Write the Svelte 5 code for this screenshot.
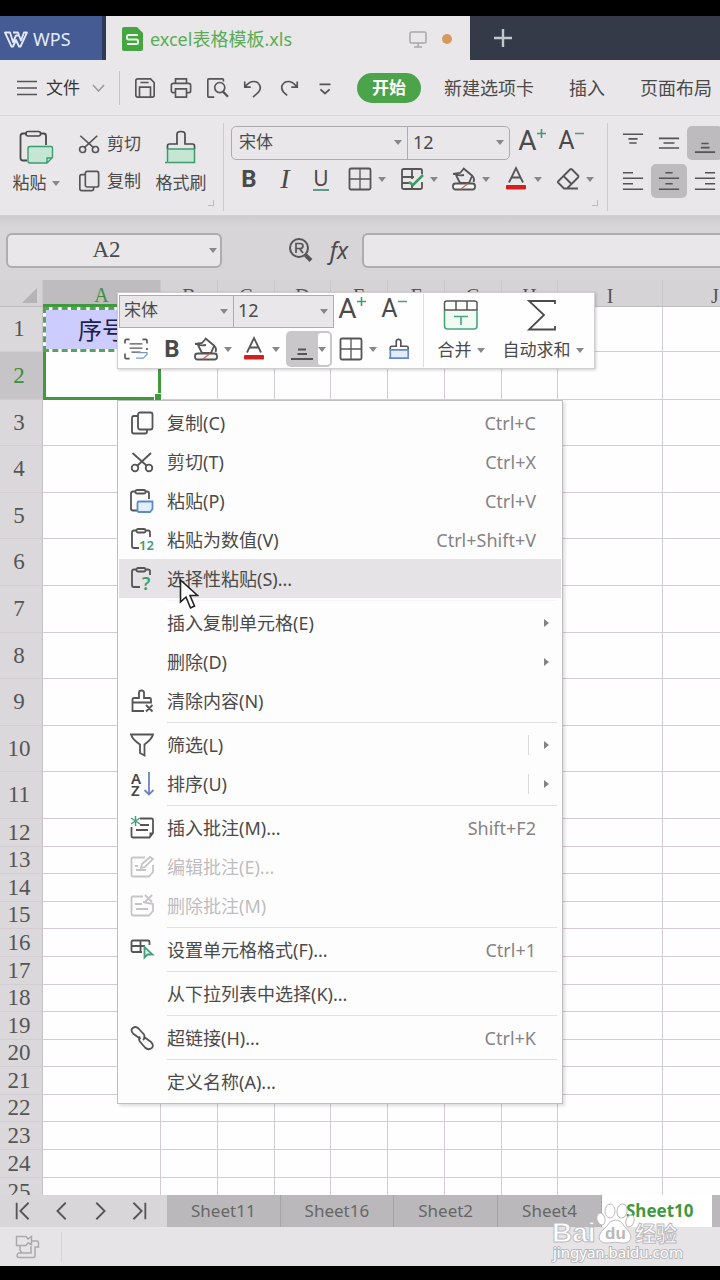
<script>
  const tabs = ['新建选项卡', '插入', '页面布局'];
  const columns = [
    { name: 'A', w: 118 }, { name: 'B', w: 57 }, { name: 'C', w: 57 }, { name: 'D', w: 56 },
    { name: 'E', w: 57 }, { name: 'F', w: 57 }, { name: 'G', w: 57 }, { name: 'H', w: 56 },
    { name: 'I', w: 105 }, { name: 'J', w: 105 }
  ];
  const rowHeights = [45, 48, 46, 47, 46, 47, 47, 46, 47, 46, 47, 28, 27, 28, 27, 28, 28, 27, 28, 27, 28, 27, 28, 28, 28];
  const menu = [
    { icon: 'copy', label: '复制(C)', key: 'Ctrl+C' },
    { icon: 'cut', label: '剪切(T)', key: 'Ctrl+X' },
    { icon: 'paste', label: '粘贴(P)', key: 'Ctrl+V' },
    { icon: 'values', label: '粘贴为数值(V)', key: 'Ctrl+Shift+V' },
    { icon: 'special', label: '选择性粘贴(S)...', active: true },
    { sep: true, faint: true },
    { label: '插入复制单元格(E)', sub: true },
    { label: '删除(D)', sub: true },
    { icon: 'clear', label: '清除内容(N)' },
    { sep: true },
    { icon: 'filter', label: '筛选(L)', sub: true, split: true },
    { icon: 'sort', label: '排序(U)', sub: true, split: true },
    { sep: true },
    { icon: 'note', label: '插入批注(M)...', key: 'Shift+F2' },
    { icon: 'editnote', label: '编辑批注(E)...', off: true },
    { icon: 'delnote', label: '删除批注(M)', off: true },
    { sep: true },
    { icon: 'format', label: '设置单元格格式(F)...', key: 'Ctrl+1' },
    { sep: true },
    { label: '从下拉列表中选择(K)...' },
    { sep: true },
    { icon: 'link', label: '超链接(H)...', key: 'Ctrl+K' },
    { sep: true },
    { label: '定义名称(A)...' }
  ];
  const sheets = ['Sheet11', 'Sheet16', 'Sheet2', 'Sheet4', 'Sheet10'];
  const activeSheet = 'Sheet10';
</script>

{#snippet icon(name)}
  <svg class="ico" viewBox="0 0 24 24" aria-hidden="true">
    {#if name === 'copy'}
      <rect x="8" y="1.500" width="14.500" height="17" rx="2" /><path d="M8 5H4Q2 5 2 7V20.500Q2 22.500 4 22.500H15Q17 22.500 17 20.500V18.500" />
    {:else if name === 'cut'}
      <path d="M2.500 3L17 16M21 3L7 16" /><circle cx="5" cy="18" r="3.300" /><circle cx="19" cy="18" r="3.300" />
    {:else if name === 'paste'}
      <path d="M6 2.500H3Q1 2.500 1 4.500V19.500Q1 21.500 3 21.500H7M15 2.500H17Q19 2.500 19 4.500V10" /><rect x="5.500" y="1" width="10" height="3.500" rx="1.500" /><path d="M9 12.500H22.500V20L20 23H9Q7.500 23 7.500 21.500V14Q7.500 12.500 9 12.500Z" stroke="#5b8bc9" fill="#e3effc" />
    {:else if name === 'values'}
      <path d="M6 2.500H4Q2 2.500 2 4.500V18Q2 20 4 20H9M16 2.500H18Q20 2.500 20 4.500V9" /><rect x="6.500" y="1" width="9" height="3.500" rx="1.500" /><text x="9" y="22" font-size="13" class="green-t">12</text>
    {:else if name === 'special'}
      <path d="M6 2.500H4Q2 2.500 2 4.500V18Q2 20 4 20H10M16 2.500H18Q20 2.500 20 4.500V8" /><rect x="6.500" y="1" width="9" height="3.500" rx="1.500" /><text x="12" y="23" font-size="18" class="green-t">?</text>
    {:else if name === 'clear'}
      <path d="M14 22H2.500V13.500H21V10.500Q21 9 19.500 9H14V3.500Q14 1.500 11.500 1.500T9 3.500V9H4Q2.500 9 2.500 10.500V14M16 16L22.500 22.500M22.500 16L16 22.500" />
    {:else if name === 'filter'}
      <path d="M1 1.500H23Q22 6 14.500 11.500V22.500L10 20V11.500Q2 6 1 1.500Z" />
    {:else if name === 'sort'}
      <text x="1" y="11.500" font-size="15" class="bold-t">A</text><text x="1" y="23.500" font-size="15" class="bold-t">Z</text><path d="M19 0V22M14.500 18L19 22.500L23.500 18" stroke="#6d84c0" />
    {:else if name === 'note'}
      <path d="M10 2.500H21.500Q23 2.500 23 4V17L19.500 21.500H3Q1.500 21.500 1.500 20V11M10 9H19M6 14H18" /><path d="M23 16.500H19.500V21.500Z" fill="#555" stroke="none" /><path d="M5.500 0V10M1 2L10 8M10 2L1 8" stroke="#4a9e7f" stroke-width="1.500" />
    {:else if name === 'editnote'}
      <path d="M15 2.500H3Q1.500 2.500 1.500 4V20Q1.500 21.500 3 21.500H19L23 17V10M11 13L12 9L20 2L23 4L15 12ZM5 11H8M6 15H16" />
    {:else if name === 'delnote'}
      <path d="M13 2.500H3Q1.500 2.500 1.500 4V20Q1.500 21.500 3 21.500H19L23 17V10L13 8M5 10H12M6 15H18M15 1L22 8M22 1L15 8" />
    {:else if name === 'format'}
      <path d="M12 14H3Q1.500 14 1.500 12.500V4Q1.500 2.500 3 2.500H18Q19.500 2.500 19.500 4V7M1.500 8H15M10.500 2.500V14" /><path d="M14.500 9V19.500L17.500 16.500L22.500 16.500Z" stroke="#4a9e7f" fill="#e0f3e9" />
    {:else if name === 'link'}
      <path d="M10.500 13L3 7.500Q0 4 3 1.700Q6 0 8.500 2.500L14 8.500Q15.500 12 13 14M13.500 10.500L21 16Q24.500 19.500 21.500 22.300Q18 24.500 15 21.500L9.500 15Q8.500 12.500 10 10.500" />
    {:else if name === 'border'}
      <rect x="1.500" y="1.500" width="21" height="21" rx="1.500" /><path d="M12 2V22M2 12H22" stroke-width="1.300" />
    {:else if name === 'cells'}
      <path d="M22 7V3.500Q22 2 20.500 2H3.500Q2 2 2 3.500V20.500Q2 22 3.500 22H20.500Q22 22 22 20.500V15M12 2V12M2 10H14M2 16H9M12 18V22" /><path d="M9 15L13 18L23 8" stroke="#3b9b66" stroke-width="2.500" />
    {:else if name === 'fill'}
      <path d="M11 1L20.500 9Q23 12 21.500 15M4 8L8 16H17L20 9M1 7L8 6L12 1.500M3 7Q6 9 12 8" /><rect x="1" y="16.500" width="22" height="6" rx="2.500" fill="#f6f4f6" /><path d="M9 22L16 16.500" stroke="#d0655d" stroke-width="1.300" />
    {:else if name === 'color'}
      <path d="M5 15.500L12 1L19 15.500M8 10.500H16" /><rect x="2" y="18" width="20" height="4.500" rx="1" fill="#d2201f" stroke="none" />
    {:else if name === 'erase'}
      <path d="M2 14.500L14 2.500Q15 1.500 16 2.500L22 8.500Q23 9.500 22 10.500L11 21.500H8L2 15.500Q1.500 15 2 14.500ZM7.500 9L15.500 17M11 21.500H22" />
    {:else if name === 'brush'}
      <path d="M2.500 13V10.500Q2.500 9 4 9H9V3.500Q9 1.500 11.500 1.500T14 3.500V9H20.500Q22 9 22 10.500V13" /><path d="M1 22H22V13H2.500V22" stroke="#6488c8" fill="#e2edfb" />
    {:else if name === 'size'}
      <path d="M0 6V3Q0 1.500 1.500 1.500H5M19 1.500H22.500Q24 1.500 24 3V6M24 13V11M0 17V21Q0 22.500 1.500 22.500H5" /><path d="M5 6.500H19M5 11H19M7 15.500H17" stroke-width="1.300" /><path d="M12 22H20L24 18V16H14" stroke="#7998c6" stroke-width="1.300" />
    {:else if name === 'save'}
      <path d="M4 2H18L22 6V20Q22 22 20 22H4Q2 22 2 20V4Q2 2 4 2ZM6 22V11H18V22M7 6H16" />
    {:else if name === 'print'}
      <path d="M6 7V2H18V7M6 17H3Q1.500 17 1.500 15V9Q1.500 7 3.500 7H20.500Q22.500 7 22.500 9V15Q22.500 17 21 17H18M6 13H18V22H6Z" />
    {:else if name === 'preview'}
      <path d="M9 22H3Q2 22 2 21V3Q2 2 3 2H18Q19 2 19 3V5" /><circle cx="15" cy="11.500" r="5.500" /><path d="M18.500 16L24 21.500" stroke-width="2.500" />
    {:else if name === 'undo'}
      <path d="M3 5V11H9.500M3.500 10.500Q10 2.500 17 6Q22.500 11 18 16.500L12 22" />
    {:else if name === 'redo'}
      <path d="M21 5V11H14.500M20.500 10.500Q14 2.500 7 6Q1.500 11 6 16.500L10 20" />
    {:else if name === 'more'}
      <path d="M6 8H18M7 13.500L12 18L17 13.500" stroke-width="2" />
    {:else if name === 'find'}
      <circle cx="10" cy="10" r="9" /><path d="M16.500 17L22 22.500" stroke-width="4" /><path d="M7 15V5.500H11Q14 5.500 14 8T11 10.500H7M10.500 10.500L14 15" stroke-width="1.700" />
    {:else if name === 'first'}
      <path d="M4 3V21M17 3L8 12L17 21" stroke-width="2" />
    {:else if name === 'prev'}
      <path d="M16 3L7 12L16 21" stroke-width="2" />
    {:else if name === 'next'}
      <path d="M8 3L17 12L8 21" stroke-width="2" />
    {:else if name === 'last'}
      <path d="M20 3V21M7 3L16 12L7 21" stroke-width="2" />
    {:else if name === 'top'}
      <path d="M1 2.500H23M7 7.500H17M8 12H16" />
    {:else if name === 'middle'}
      <path d="M1 7H23M6 12H18M1 17.500H23" />
    {:else if name === 'bottom'}
      <path d="M8 12.500H16M7.500 17H17M1 22H23" />
    {:else if name === 'left'}
      <path d="M1 3H12M1 9H23M1 15H12M1 21H23" />
    {:else if name === 'center'}
      <path d="M8 3H16M1 9H23M8 15H16M1 21H23" />
    {:else if name === 'right'}
      <path d="M12 3H23M1 9H23M12 15H23M1 21H23" />
    {/if}
  </svg>
{/snippet}

{#snippet caret()}<i class="caret"></i>{/snippet}

{#snippet tool(name, label)}
  <button class="tool pair" aria-label={label}>{@render icon(name)}{@render caret()}</button>
{/snippet}

{#snippet grow()}
  <button class="tool grow" aria-label="增大字号">A<svg width="9" height="9" viewBox="0 0 9 9" aria-hidden="true"><path d="M4.500 0V9M0 4.500H9" stroke="#3f9c71" stroke-width="1.600" /></svg></button>
  <button class="tool grow small" aria-label="减小字号">A<svg width="9" height="9" viewBox="0 0 9 9" aria-hidden="true"><path d="M0 4.500H9" stroke="#6f8f86" stroke-width="1.600" /></svg></button>
{/snippet}

{#snippet fontPickers()}
  <label class="pick face"><select aria-label="字体"><option>宋体</option></select>{@render caret()}</label>
  <label class="pick size"><select aria-label="字号"><option>12</option></select>{@render caret()}</label>
{/snippet}

<div class="app">
  <header class="titlebar">
    <button class="wps">
      <svg width="24" height="17" viewBox="0 0 24 17" aria-hidden="true"><path d="M1 1.500H6L9 11L12 4.500H15L17 9.500L20 1.500H23L16.500 15.500H15L12 9L9 15.500H7.500ZM9 1.500H14L15 4.500" fill="none" stroke="#e4ebf8" stroke-width="1.800" stroke-linejoin="round" /></svg>
      <span>WPS</span>
    </button>
    <div class="doc">
      <svg width="21" height="24" viewBox="0 0 21 24" aria-hidden="true"><path d="M2 0H15L21 6V22Q21 24 19 24H2Q0 24 0 22V2Q0 0 2 0Z" fill="#45a641" /><path d="M16 8H6.500Q5 8 5 9.500V11Q5 12.500 6.500 12.500H14.500Q16 12.500 16 14V15.500Q16 17 14.500 17H5" fill="none" stroke="#e6f5e5" stroke-width="2" /></svg>
      <span class="docname">excel表格模板.xls</span>
      <svg width="18" height="17" viewBox="0 0 18 17" aria-hidden="true"><path d="M2.500 1H15.500Q17 1 17 2.500V10.500Q17 12 15.500 12H2.500Q1 12 1 10.500V2.500Q1 1 2.500 1ZM9 12V16M5 16H13" fill="none" stroke="#a9a7a9" stroke-width="1.500" /></svg>
      <i class="dot"></i>
    </div>
    <button class="plus" aria-label="新建">
      <svg width="18" height="18" viewBox="0 0 18 18" aria-hidden="true"><path d="M9 0V18M0 9H18" stroke="#c3c7d0" stroke-width="2.400" /></svg>
    </button>
  </header>

  <nav class="menubar">
    <button class="file">
      <svg width="20" height="16" viewBox="0 0 20 16" aria-hidden="true"><path d="M0 1.500H20M0 8H20M0 14.500H20" stroke="#555" stroke-width="1.500" /></svg>
      <span>文件</span>
      <svg width="13" height="8" viewBox="0 0 13 8" aria-hidden="true"><path d="M1 1L6.500 7L12 1" fill="none" stroke="#999" stroke-width="1.500" /></svg>
    </button>
    <div class="quick">
      {#each [['save', '保存'], ['print', '打印'], ['preview', '打印预览'], ['undo', '撤销'], ['redo', '恢复'], ['more', '更多']] as [n, l]}
        <button class="tool" aria-label={l}>{@render icon(n)}</button>
      {/each}
    </div>
    <button class="home">开始</button>
    {#each tabs as t}<button class="tab">{t}</button>{/each}
  </nav>

  <section class="ribbon">
    <div class="group clip">
      <button class="big">
        <svg width="36" height="36" viewBox="0 0 36 36" aria-hidden="true"><path d="M9 4.500H5Q2.500 4.500 2.500 7V29Q2.500 31.500 5 31.500H9M22 4.500H25.500Q28 4.500 28 7V16" fill="none" stroke="#4a4a4a" stroke-width="1.800" /><rect x="8" y="2.500" width="14.500" height="4.500" rx="2" fill="none" stroke="#4a4a4a" stroke-width="1.600" /><path d="M12 17.500H33Q34.500 17.500 34.500 19V28.500L29 34H12Q10 34 10 32V19Q10 17.500 12 17.500ZM29 34V29H34" fill="#c4e6d3" stroke="#3f9c71" stroke-width="1.400" /></svg>
        <span>粘贴{@render caret()}</span>
      </button>
      <div class="stack">
        <button>{@render icon('cut')}剪切</button>
        <button>{@render icon('copy')}复制</button>
      </div>
      <button class="big">
        <svg width="36" height="36" viewBox="0 0 36 36" aria-hidden="true"><path d="M4.500 20V17Q4.500 15 6.500 15H14V5Q14 2.500 18 2.500T22 5V15H29.500Q31.500 15 31.500 17V20" fill="none" stroke="#4a4a4a" stroke-width="1.700" /><path d="M2 33.500H31.500V20H4.500V33.500" fill="#c4e6d3" stroke="#3f9c71" stroke-width="1.500" /></svg>
        <span>格式刷</span>
      </button>
      <i class="launch"></i>
    </div>
    <div class="group font">
      <div class="line">
        <div class="pickers">{@render fontPickers()}</div>
        {@render grow()}
      </div>
      <div class="line">
        <button class="tool b">B</button>
        <button class="tool i">I</button>
        <button class="tool u"><span>U</span></button>
        <div class="pairs">
          {@render tool('border', '边框')}
          {@render tool('cells', '单元格样式')}
          {@render tool('fill', '填充颜色')}
          {@render tool('color', '字体颜色')}
          {@render tool('erase', '清除')}
        </div>
      </div>
      <i class="launch"></i>
    </div>
    <div class="group align">
      {#each [['top', '顶端对齐'], ['middle', '垂直居中'], ['bottom', '底端对齐'], ['left', '左对齐'], ['center', '水平居中'], ['right', '右对齐']] as [n, l]}
        <button class="tool" class:on={n === 'bottom' || n === 'center'} aria-label={l}>{@render icon(n)}</button>
      {/each}
    </div>
  </section>

  <section class="formula">
    <label class="namebox"><input value="A2" aria-label="名称框" />{@render caret()}</label>
    <button class="tool" aria-label="查找">{@render icon('find')}</button>
    <button class="tool fx">fx</button>
    <input class="expr" aria-label="编辑栏" />
  </section>

  <main class="grid">
    <table>
      <colgroup><col style="width:43px" />{#each columns as c}<col style="width:{c.w}px" />{/each}</colgroup>
      <thead>
        <tr>
          <th class="corner"><svg width="15" height="15" viewBox="0 0 15 15" aria-hidden="true"><path d="M15 0V15H0Z" fill="#b5b3b5" /></svg></th>
          {#each columns as c}<th class:sel={c.name === 'A'}>{c.name}</th>{/each}
        </tr>
      </thead>
      <tbody>
        {#each rowHeights as h, r}
          <tr style="height:{h}px">
            <th class:sel={r === 1}>{r + 1}</th>
            {#each columns as c, k}
              <td class:copied={r === 0 && k === 0} class:cursor={r === 1 && k === 0}>{#if r === 0 && k === 0}序号{/if}</td>
            {/each}
          </tr>
        {/each}
      </tbody>
    </table>

    <div class="mini">
      <div class="mini-left">
        <div class="line">
          <div class="pickers">{@render fontPickers()}</div>
          {@render grow()}
        </div>
        <div class="line lower">
          <button class="tool" aria-label="行高">{@render icon('size')}</button>
          <button class="tool b">B</button>
          {@render tool('fill', '填充颜色')}
          {@render tool('color', '字体颜色')}
          <button class="tool pair pressed" aria-label="底端对齐">{@render icon('bottom')}{@render caret()}</button>
          {@render tool('border', '边框')}
          <button class="tool" aria-label="格式刷">{@render icon('brush')}</button>
        </div>
      </div>
      <button class="big">
        <svg width="36" height="32" viewBox="0 0 36 32" aria-hidden="true"><path d="M1.500 11.500V27Q1.500 30 4.500 30H31Q34 30 34 27V11.500" fill="#f1fbf6" stroke="#48a67c" stroke-width="1.600" /><path d="M1.500 11V4Q1.500 2 4 2H31.500Q34 2 34 4V11ZM13 2V11M24 2V11" fill="none" stroke="#555" stroke-width="1.500" /><path d="M11 17.500H25M18 17.500V26" stroke="#48a67c" stroke-width="1.600" /></svg>
        <span>合并{@render caret()}</span>
      </button>
      <button class="big">
        <svg width="36" height="32" viewBox="0 0 36 32" aria-hidden="true"><path d="M31 5V2H5L20 16L5 30.500H31V27" fill="none" stroke="#4a4a4a" stroke-width="1.800" /></svg>
        <span>自动求和{@render caret()}</span>
      </button>
    </div>

    <div class="menu" role="menu">
      {#each menu as m}
        {#if m.sep}
          <hr class:faint={m.faint} />
        {:else}
          <button role="menuitem" class:active={m.active} disabled={m.off}>
            <span class="slot">{#if m.icon}{@render icon(m.icon)}{/if}</span>
            <span class="label">{m.label}</span>
            <span class="key" class:split={m.split}>{m.key ?? ''}</span>
            <span class="arrow">{#if m.sub}<i></i>{/if}</span>
          </button>
        {/if}
      {/each}
    </div>

    <svg class="pointer" width="20" height="32" viewBox="0 0 20 32" aria-hidden="true"><path d="M1.500 2V24L7 19L11.500 30L15.500 28L11 17.500H18.500Z" fill="#fff" stroke="#222" stroke-width="1.600" /></svg>
  </main>

  <footer>
    <div class="sheets">
      <div class="steps">
        {#each [['first', '第一张'], ['prev', '上一张'], ['next', '下一张'], ['last', '最后一张']] as [n, l]}
          <button class="tool" aria-label={l}>{@render icon(n)}</button>
        {/each}
      </div>
      {#each sheets as s}<button class="sheet" class:current={s === activeSheet}>{s}</button>{/each}
      <span class="rest"></span>
    </div>
    <div class="status">
      <svg width="25" height="24" viewBox="0 0 25 24" aria-hidden="true"><path d="M1.500 1.500H11L13 4L16.500 1.500V9.500L13 8L11 10.500H1.500ZM5 10.500V15L7 18M17 6H22Q23.500 6 23.500 7.500V12H20V21Q20 22.500 18.500 22.500H4Q2 22.500 2 20.500T4 18H16V11" fill="none" stroke="#aaa8aa" stroke-width="1.500" /></svg>
    </div>
    <svg class="mark" width="134" height="62" viewBox="0 0 134 62" aria-label="Baidu 经验">
      <g fill="#fff" stroke="#bdbbbd" stroke-width="1">
        <ellipse cx="52" cy="19" rx="4" ry="6" transform="rotate(-15 52 19)" />
        <ellipse cx="61" cy="11" rx="5" ry="7" />
        <ellipse cx="73" cy="11" rx="5" ry="7" transform="rotate(8 73 11)" />
        <ellipse cx="81" cy="21" rx="4" ry="6" transform="rotate(20 81 21)" />
        <path d="M66 20Q72 20 75 26Q81 32 82 36Q82 44 73 43Q66 41.500 59 43Q50 44 50 36Q51 32 58 26Q61 20 66 20Z" />
        <text x="3" y="42" font-size="28" class="wm">Bai</text>
        <text x="86" y="41" font-size="21" class="cjk">经验</text>
      </g>
      <text x="56" y="39" font-size="17" class="du">du</text>
      <text x="4" y="58" font-size="15" class="url">jingyan.baidu.com</text>
    </svg>
  </footer>
</div>

<style>
  :global(body) { margin: 0; background: #000; }
  .app {
    display: flex; flex-direction: column; box-sizing: border-box;
    height: 100vh; padding: 16px 0 14px; overflow: hidden; background: #000;
    font: 17px/24px "Noto Sans", "Noto Sans CJK SC", sans-serif; color: #4a4a4a;
  }
  button, select, input { font: inherit; color: inherit; border: 0; background: none; padding: 0; margin: 0; box-sizing: border-box; }
  button { display: flex; align-items: center; justify-content: center; white-space: nowrap; flex: none; }
  svg { flex: none; display: block; }
  .ico { width: 22px; height: 22px; fill: none; stroke: #555; stroke-width: 1.800; overflow: visible; }
  .ico text { stroke: none; fill: #444; font-family: "Noto Sans", sans-serif; }
  .ico .green-t { fill: #3f9c71; font-weight: 600; }
  .ico .bold-t { font-weight: 600; }
  .caret { width: 0; height: 0; border: 4px solid transparent; border-top: 5px solid #888; border-bottom: 0; flex: none; }

  .titlebar { display: flex; flex: none; height: 44px; background: #353a49; }
  .wps { width: 106px; justify-content: flex-start; gap: 5px; padding: 2px 0 0 4px; background: #445b93; border-right: 4px solid #303a58; color: #e4ebf8; font-size: 18px; }
  .doc { display: flex; align-items: center; width: 364px; box-sizing: border-box; padding: 2px 18px 0 16px; background: #e9e7e9; }
  .docname { flex: 1; padding-left: 7px; font-size: 18px; color: #58ad55; }
  .dot { width: 10px; height: 10px; margin-left: 15px; border-radius: 50%; background: #d59a5e; }
  .plus { width: 66px; }

  .menubar { display: flex; align-items: center; flex: none; height: 56px; box-sizing: border-box; background: #e9e7e9; border-bottom: 1px solid #dad8da; font-size: 18px; overflow: hidden; }
  .file { gap: 9px; height: 34px; padding: 0 14px 0 17px; border-right: 1px solid #c6c4c6; }
  .file span { font-size: 17px; color: #333; }
  .file svg:last-child { margin-left: 3px; }
  .quick { display: flex; padding-left: 7px; }
  .quick .tool { width: 36px; height: 30px; }
  .home { width: 64px; height: 30px; margin: 0 12px 0 14px; border-radius: 15px; background: #4ba34a; color: #fff; font-weight: 700; font-size: 17px; }
  .tab { padding: 0 11px; margin-right: 13px; }

  .ribbon { display: flex; flex: none; height: 100px; box-sizing: border-box; padding: 7px 0 4px; background: #e9e7e9; border-bottom: 1px solid #d2d0d2; overflow: hidden; }
  .group { display: flex; position: relative; flex: none; }
  .clip { width: 224px; box-sizing: border-box; border-right: 1px solid #cdcbcd; padding-left: 9px; }
  .font { width: 384px; box-sizing: border-box; border-right: 1px solid #cdcbcd; flex-direction: column; padding: 2px 0 0 7px; }
  .launch { position: absolute; right: 9px; bottom: 5px; width: 5px; height: 5px; border-right: 1px solid #bbb; border-bottom: 1px solid #bbb; }
  .big { flex-direction: column; justify-content: flex-start; gap: 7px; padding-top: 6px; }
  .clip .big:first-child { width: 54px; }
  .clip .big:nth-child(3) { width: 64px; }
  .big span { display: flex; align-items: center; gap: 5px; line-height: 22px; }
  .stack { display: flex; flex-direction: column; width: 86px; padding: 2px 0 0 15px; box-sizing: border-box; }
  .stack button { justify-content: flex-start; gap: 7px; height: 37px; }
  .line { display: flex; align-items: center; }
  .pickers { display: flex; height: 34px; box-sizing: border-box; border: 1px solid #aeacae; border-radius: 5px; }
  .font .line:first-child { height: 35px; }
  .pick { display: flex; align-items: center; padding-right: 5px; box-sizing: border-box; }
  .pick select { flex: 1; appearance: none; width: 0; height: 100%; padding: 0 0 2px 7px; outline: 0; }
  .face { width: 176px; border-right: 1px solid #aeacae; }
  .size { width: 101px; }
  .size select { padding-left: 5px; font-size: 18px; }
  .tool { width: 36px; height: 38px; }
  .grow { align-items: flex-start; font: 28px/30px Roboto, sans-serif; width: 44px; height: 34px; }
  .grow svg { margin-top: 3px; }
  .grow.small { font-size: 25px; width: 34px; }
  .b { font: 700 24px/24px Roboto, sans-serif; }
  .i { font-family: "Liberation Serif", serif; font-style: italic; font-size: 28px; }
  .u span { font-size: 21px; line-height: 22px; border-bottom: 2px solid #5b9c89; }
  .pairs { display: flex; gap: 10px; padding-left: 9px; }
  .pair { width: 42px; gap: 6px; justify-content: flex-start; }
  .pair .ico { width: 24px; height: 24px; }
  .align { display: grid; grid-template-columns: repeat(3, 36px); grid-auto-rows: 38px; row-gap: 0; padding: 1px 0 0 7px; }
  .align .tool { height: 34px; align-self: center; border-radius: 5px; }
  .align .on { background: #bdbbbd; }

  .formula { display: flex; align-items: center; flex: none; height: 64px; box-sizing: border-box; padding: 4px 0 0 6px; background: linear-gradient(#cecccf, #d7d5d7 10px); }
  .namebox { display: flex; align-items: center; width: 216px; height: 35px; box-sizing: border-box; padding-right: 3px; border: 2px solid #aeacae; border-radius: 6px; background: #e9e7e9; }
  .namebox input { flex: 1; width: 0; text-align: center; font: 23px/30px "Liberation Serif", "Noto Sans CJK SC", serif; padding-right: 4px; }
  .formula .tool { width: 38px; }
  .formula .tool:nth-child(2) { margin-left: 60px; }
  .formula .tool .ico { width: 24px; height: 24px; stroke-width: 2; }
  .fx { font-style: italic; font-size: 23px; }
  .expr { flex: 1; height: 35px; margin-left: 4px; border: 2px solid #aeacae; border-right: 0; border-radius: 6px 0 0 6px; background: #e9e7e9; }

  .grid { position: relative; flex: 1; min-height: 0; overflow: hidden; background: #fff; }
  table { width: 768px; table-layout: fixed; border-spacing: 0; }
  th, td { box-sizing: border-box; padding: 0; overflow: hidden; border-right: 1px solid #d3ccd3; border-bottom: 1px solid #d3ccd3; }
  td { background: #fefefe; }
  th { font: 23px/22px "Liberation Serif", serif; color: #555; background: #dad8da; border-right-color: #c5c3c5; }
  thead th { height: 27px; font-size: 20px; line-height: 18px; padding-top: 5px; background: #d5d3d5; border-bottom-color: #bdbbbd; border-right-color: #c9c7c9; }
  thead th.sel { background: #bebcbe; color: #3e8e41; border-bottom: 3px solid #3e9a3d; }
  tbody th { padding-right: 4px; }
  tbody th.sel { background: #c6c4c6; color: #3e8e41; }
  thead .corner { padding: 4px 5px 0 0; }
  .corner svg { margin-left: auto; }
  .copied { background: #ccccff; background-clip: padding-box; font-size: 24px; text-align: center; color: #1d2148; border: 3px dashed #58a356; }
  .cursor { position: relative; overflow: visible; border: 3px solid #3e9a3d; border-top: 0; }
  .cursor::after { content: ""; position: absolute; right: -4px; bottom: -4px; width: 6px; height: 6px; background: #3e9a3d; border: 1px solid #fff; }

  .mini { position: absolute; left: 117px; top: 12px; display: flex; background: #fefefe; border: 1px solid #cfcdcf; box-sizing: border-box; height: 77px; width: 478px; box-shadow: 1px 1px 3px #0003; }
  .mini-left { width: 305px; margin: 1px 0; border-right: 1px solid #e0dee0; }
  .mini .pickers { height: 33px; margin-left: 1px; border-radius: 0; background: #e9e7e9; }
  .mini .face { width: 114px; }
  .mini .size { width: 99px; }
  .mini .pick select { padding-left: 4px; }
  .mini .grow { width: 36px; }
  .mini .grow.small { width: 48px; }
  .lower { padding: 3px 0 0 0; }
  .lower .tool { width: 36px; height: 36px; }
  .lower .tool:last-child { width: 32px; }
  .lower .pair { width: 48px; padding-left: 4px; }
  .lower .pressed { position: relative; width: 46px; margin-right: 3px; background: #c9c7c9; border-radius: 5px; gap: 4px; }
  .lower .pressed::before { content: ""; position: absolute; right: 2px; top: 2px; bottom: 2px; width: 12px; background: #fefefe; border-radius: 3px; }
  .lower .pressed .caret { position: relative; }
  .mini .big { width: 74px; padding-top: 6px; gap: 8px; }
  .mini .big:last-child { width: 90px; }
  .mini .big:last-child svg { margin-right: 2px; }

  .menu { position: absolute; left: 117px; top: 120px; width: 446px; box-sizing: border-box; padding: 2px 1px; background: #fefdfe; border: 1px solid #bfbdbf; box-shadow: 2px 2px 3px #0002; font-size: 18px; }
  .menu button { display: grid; grid-template-columns: 24px 1fr auto 25px; align-items: center; width: 100%; height: 39px; padding-left: 11px; text-align: left; }
  .menu button.active { background: #e5e3e5; }
  .menu button:disabled { color: #bfbdbf; }
  .menu .ico { width: 24px; height: 24px; }
  .menu button:disabled .ico { stroke: #c6c4c6; }
  .label { padding-left: 13px; }
  .key { color: #858385; }
  .split { height: 20px; padding-right: 7px; border-left: 1px solid #dcdadc; }
  .arrow { display: flex; }
  .arrow i { margin-left: 8px; border: 4px solid transparent; border-left: 5px solid #858385; border-right: 0; }
  .menu hr { height: 1px; margin: 2px 4px 2px 48px; border: 0; background: #e2e0e2; }
  .menu hr.faint { background: #f6f4f6; }
  .pointer { position: absolute; left: 179px; top: 298px; }

  footer { position: relative; flex: none; background: #e6e4e6; }
  .sheets { display: flex; height: 32px; background: #cfcdcf; overflow: hidden; }
  .steps { display: flex; align-items: center; width: 167px; padding-left: 5px; box-sizing: border-box; flex: none; background: #d8d6d8; }
  .steps .tool { width: 38px; height: 32px; }
  .sheet { padding: 0 24px; background: #bab8ba; border-right: 1px solid #a5a3a5; color: #666; }
  .sheet.current { padding: 0 18px 0 24px; background: #fff; color: #3f9a3d; font-weight: 700; border: 0; }
  .rest { flex: 1; background: #bab8ba; }
  .status { display: flex; align-items: center; height: 39px; padding-left: 15px; }
  .status::after { content: ""; height: 30px; margin-left: 21px; border-left: 1px solid #d5d3d5; }
  .mark { position: absolute; right: 37px; bottom: 4px; overflow: visible; }
  .wm { font-family: "Liberation Sans", sans-serif; font-weight: 700; }
  .cjk { font-family: "Noto Sans CJK SC", sans-serif; font-weight: 700; }
  .du { font-family: "Liberation Sans", sans-serif; font-weight: 700; fill: #bab8ba; }
  .url { font-family: "Noto Sans", sans-serif; fill: #fff; stroke: #b9b7b9; stroke-width: 2; paint-order: stroke; }
</style>
